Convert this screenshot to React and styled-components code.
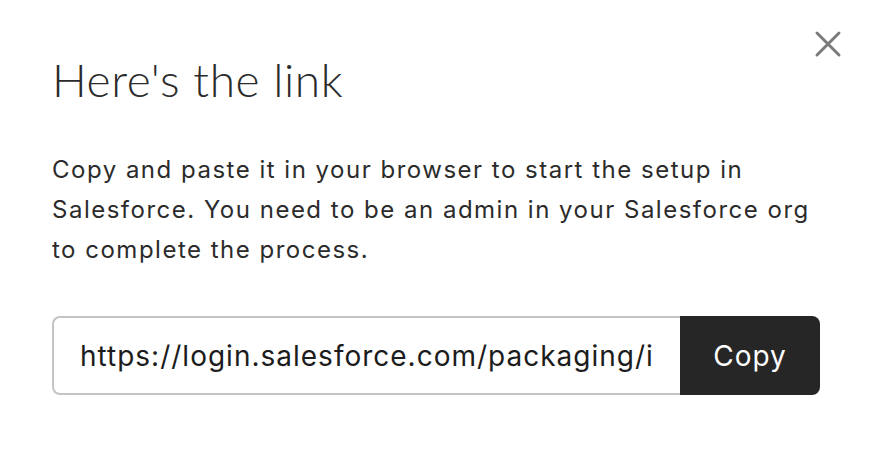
import React from "react";
import styled, { createGlobalStyle } from "styled-components";

const Global = createGlobalStyle`
  html, body { margin: 0; padding: 0; background: #ffffff; }
  body { font-family: Inter, "Noto Sans", sans-serif; }
`;

const Dialog = styled.div`
  position: relative;
  box-sizing: border-box;
  width: 874px;
  height: 464px;
  padding: 52px 54px 0 52px;
  background: #ffffff;
  color: #2b2b2b;
`;

const Close = styled.button`
  position: absolute;
  top: 30px;
  right: 32px;
  width: 28px;
  height: 28px;
  padding: 0;
  border: 0;
  background: transparent;
  cursor: pointer;
  display: flex;
  align-items: center;
  justify-content: center;
`;

const Title = styled.h1`
  margin: 0;
  font-family: Lato, "Open Sans", sans-serif;
  font-weight: 300;
  font-size: 46px;
  line-height: 56px;
  letter-spacing: 0.6px;
  color: #2b2b2b;
`;

const Body = styled.p`
  margin: 42px 0 0 0;
  font-family: Inter, "Noto Sans", sans-serif;
  font-size: 24px;
  line-height: 40px;
  font-weight: 400;
  letter-spacing: 1.5px;
  color: #2b2b2b;
`;

const LinkRow = styled.div`
  display: flex;
  margin-top: 46px;
  height: 79px;
  width: 768px;
`;

const LinkField = styled.input`
  flex: 1;
  min-width: 0;
  box-sizing: border-box;
  height: 79px;
  margin: 0;
  border: 2px solid #c4c4c4;
  border-right: 0;
  border-radius: 8px 0 0 8px;
  padding: 0 26px 0 26px;
  background: #ffffff;
  outline: none;
  font-family: Inter, "Noto Sans", sans-serif;
  font-size: 28px;
  letter-spacing: 1px;
  color: #1c1c1c;
`;

const CopyButton = styled.button`
  width: 140px;
  border: 0;
  border-radius: 0 8px 8px 0;
  background: #262626;
  color: #ffffff;
  font-family: Inter, "Noto Sans", sans-serif;
  font-size: 28px;
  letter-spacing: 1px;
  cursor: pointer;
`;

export default function App() {
  return (
    <>
      <Global />
      <Dialog>
        <Close aria-label="Close">
          <svg width="28" height="28" viewBox="0 0 28 28">
            <path d="M3 3 L25 25 M25 3 L3 25" stroke="#7a7a7a" strokeWidth="3" strokeLinecap="round" />
          </svg>
        </Close>
        <Title>Here's the link</Title>
        <Body>
          Copy and paste it in your browser to start the setup in Salesforce. You need to be an admin in your Salesforce org to complete the process.
        </Body>
        <LinkRow>
          <LinkField
            readOnly
            value="https://login.salesforce.com/packaging/installPackage.apexp?p0=04t"
          />
          <CopyButton>Copy</CopyButton>
        </LinkRow>
      </Dialog>
    </>
  );
}
